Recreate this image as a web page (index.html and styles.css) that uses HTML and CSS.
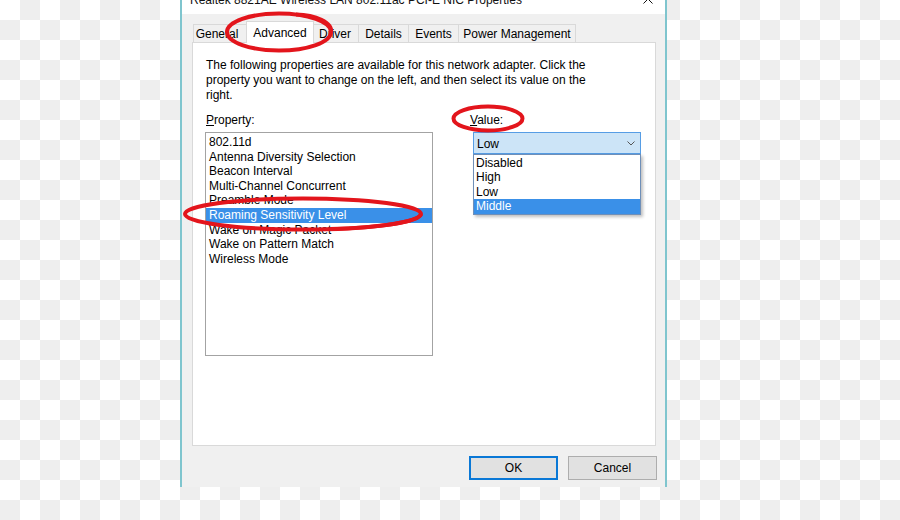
FILE: index.html
```html
<!DOCTYPE html>
<html lang="en">
<head>
    <meta charset="UTF-8">
    <title>Realtek 8821AE Wireless LAN 802.11ac PCI-E NIC Properties</title>
    <link rel="stylesheet" href="styles.css">
</head>
<body>
    <div class="window">
        <div class="titlebar">
            <span class="title">Realtek 8821AE Wireless LAN 802.11ac PCI-E NIC Properties</span>
            <svg class="close" width="10" height="10" viewBox="0 0 10 10">
                <path d="M0.5 0.5 L9.5 9.5 M9.5 0.5 L0.5 9.5" stroke="#111" stroke-width="1"/>
            </svg>
        </div>

        <div class="tabs">
            <div class="tab tab-general">General</div>
            <div class="tab tab-advanced active">Advanced</div>
            <div class="tab tab-driver">Driver</div>
            <div class="tab tab-details">Details</div>
            <div class="tab tab-events">Events</div>
            <div class="tab tab-power">Power Management</div>
        </div>

        <div class="panel">
            <p class="intro">The following properties are available for this network adapter. Click the property you want to change on the left, and then select its value on the right.</p>

            <div class="fields">
                <div class="field">
                    <div class="label"><u>P</u>roperty:</div>
                    <div class="listbox">
                        <div class="item">802.11d</div>
                        <div class="item">Antenna Diversity Selection</div>
                        <div class="item">Beacon Interval</div>
                        <div class="item">Multi-Channel Concurrent</div>
                        <div class="item">Preamble Mode</div>
                        <div class="item selected">Roaming Sensitivity Level</div>
                        <div class="item">Wake on Magic Packet</div>
                        <div class="item">Wake on Pattern Match</div>
                        <div class="item">Wireless Mode</div>
                    </div>
                </div>

                <div class="field">
                    <div class="label"><u>V</u>alue:</div>
                    <div class="combo">
                        <div class="combo-box">
                            <span>Low</span>
                            <svg width="8" height="5" viewBox="0 0 8 5">
                                <path d="M0.5 0.5 L4 4 L7.5 0.5" fill="none" stroke="#555" stroke-width="1"/>
                            </svg>
                        </div>
                        <div class="dropdown">
                            <div class="item">Disabled</div>
                            <div class="item">High</div>
                            <div class="item">Low</div>
                            <div class="item selected">Middle</div>
                        </div>
                    </div>
                </div>
            </div>
        </div>

        <div class="buttons">
            <button class="btn btn-default">OK</button>
            <button class="btn">Cancel</button>
        </div>
    </div>

    <!-- red marker circles drawn over the screenshot -->
    <svg class="marks" width="900" height="520" viewBox="0 0 900 520">
        <ellipse cx="279" cy="32" rx="52" ry="18.5" />
        <path d="M296 14.5 C315 15 333 22 331 33" />
        <ellipse cx="488" cy="118.5" rx="34.5" ry="12" />
        <ellipse cx="303" cy="214" rx="118" ry="15.5" />
        <path d="M330 229 C380 228 418 222 421 214" />
    </svg>
</body>
</html>
```

FILE: styles.css
```css
body {
    margin: 0;
    width: 900px;
    height: 520px;
    overflow: hidden;
    position: relative;
    font-family: "Liberation Sans", Arial, sans-serif;
    font-size: 12px;
    color: #000;
    background: repeating-conic-gradient(#eee 0 25%, #fff 0 50%) 0 0 / 40px 40px;
}
.window {
    margin-left: 180px;
    width: 487px;
    height: 487px;
    box-sizing: border-box;
    border-left: 2px solid #7fc5ce;
    border-right: 2px solid #7fc5ce;
    background: #f0f0f0;
    display: flex;
    flex-direction: column;
}
.titlebar {
    height: 14px;
    flex: none;
    background: #fff;
    display: flex;
    align-items: flex-start;
    justify-content: space-between;
    padding: 0 12px 0 8px;
    overflow: hidden;
}
.title {
    line-height: 16px;
    margin-top: -8px;
    white-space: nowrap;
    color: #111;
}
.close {
    margin-top: -6px;
}
.tabs {
    display: flex;
    align-items: flex-end;
    height: 21px;
    flex: none;
    margin: 7px 0 0 11px;
}
.tab {
    height: 18px;
    box-sizing: border-box;
    border: 1px solid #d9d9d9;
    border-bottom: none;
    margin-left: -1px;
    line-height: 19px;
    text-align: center;
    background: #f0f0f0;
    white-space: nowrap;
}
.tab-general { width: 56px; margin-left: 0; padding-right: 8px; }
.tab-advanced { width: 64px; }
.tab-driver { width: 48px; }
.tab-details { width: 51px; }
.tab-events { width: 51px; }
.tab-power { width: 118px; }
.tab.active {
    width: 68px;
    height: 22px;
    margin: 0 -2px -1px -3px;
    line-height: 22px;
    background: #fff;
    position: relative;
    z-index: 1;
}
.panel {
    margin: 0 9px 0 10px;
    height: 404px;
    flex: none;
    box-sizing: border-box;
    border: 1px solid #d9d9d9;
    background: #fff;
    padding: 15px 0 0 13px;
}
.intro {
    margin: 0 0 10px;
    width: 400px;
    line-height: 15px;
}
.fields {
    display: grid;
    grid-template-columns: 228px 171px;
    column-gap: 37px;
    margin-left: -1px;
}
.label {
    line-height: 15px;
    margin-bottom: 4px;
}
.fields .field:first-child .label {
    padding-left: 1px;
}
.listbox {
    width: 228px;
    height: 224px;
    box-sizing: border-box;
    border: 1px solid #a3a3a3;
    padding-top: 2px;
}
.item {
    line-height: 14.6px;
    padding-left: 3px;
    white-space: nowrap;
}
.item.selected {
    background: #3a90e8;
    color: #fff;
}
.combo {
    position: relative;
    margin-left: 3px;
    width: 168px;
}
.combo-box {
    height: 22px;
    box-sizing: border-box;
    border: 1px solid #569de5;
    background: #cce4f7;
    display: flex;
    align-items: center;
    justify-content: space-between;
    padding: 2px 5px 0 3px;
}
.combo-box svg {
    margin-top: -2px;
}
.dropdown {
    position: absolute;
    top: 100%;
    left: 0;
    width: 168px;
    box-sizing: border-box;
    border: 1px solid #6f8fb8;
    padding-top: 1px;
    background: #fff;
    box-shadow: 2px 2px 3px rgba(0, 0, 0, 0.25);
    z-index: 2;
}
.dropdown .item {
    padding-left: 2px;
    line-height: 14.4px;
}
.buttons {
    display: flex;
    justify-content: flex-end;
    gap: 10px;
    margin: 10px 8px 0 0;
}
.btn {
    width: 89px;
    height: 24px;
    box-sizing: border-box;
    border: 1px solid #adadad;
    background: #e1e1e1;
    font-family: "Liberation Sans", Arial, sans-serif;
    font-size: 12px;
    color: #000;
    padding: 0;
}
.btn-default {
    border-color: #0a78d6;
    box-shadow: inset 0 0 0 1px #0a78d6;
}
.marks {
    position: absolute;
    top: 0;
    left: 0;
    pointer-events: none;
    fill: none;
    stroke: #e3151c;
    stroke-width: 4;
}
```
